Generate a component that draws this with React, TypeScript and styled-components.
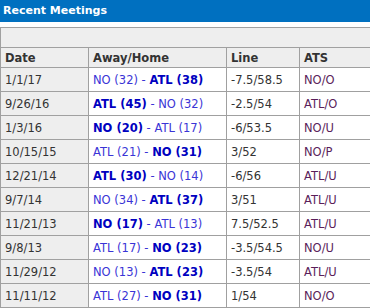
import styled, { createGlobalStyle } from 'styled-components'

const GlobalStyle = createGlobalStyle`
    body {
        margin: 0;
        background: #fff;
        font-family: "DejaVu Sans", Verdana, sans-serif;
    }
`

const Section_Panel = styled.section`
    width: 370px;
    background-color: #fff;
`
const H_Title = styled.h2`
    margin: 0;
    height: 22px;
    line-height: 22px;
    padding: 0 3px;
    background-color: #0070c0;
    color: #fff;
    font-size: 11px;
    font-weight: bold;
`
const Table_Meetings = styled.table`
    margin-top: 5px;
    width: 370px;
    border-collapse: collapse;
    table-layout: fixed;
    font-size: 11.5px;
    color: #333;
`
const Col_Width = styled.col<{ $w: number }>`
    width: ${(p) => p.$w}px;
`
const Td_Blank = styled.td`
    height: 19px;
    padding: 0;
    background-color: #eee;
    border: 1px solid #a0a0a0;
`
const Th_Head = styled.th`
    height: 19px;
    padding: 0 4px;
    text-align: left;
    font-size: 11.5px;
    font-weight: bold;
    color: #333;
    background-color: #eee;
    border: 1px solid #a0a0a0;
`
const Td_Cell = styled.td<{ $shade?: boolean; $ats?: boolean }>`
    height: 23px;
    padding: 0 4px;
    white-space: nowrap;
    overflow: hidden;
    background-color: ${(p) => (p.$shade ? '#eee' : '#fff')};
    color: ${(p) => (p.$ats ? '#5a1e5a' : '#333')};
    border: 1px solid #a0a0a0;
`
const Span_Team = styled.span<{ $win?: boolean }>`
    color: ${(p) => (p.$win ? '#0000c0' : '#3a34d6')};
    font-weight: ${(p) => (p.$win ? 'bold' : 'normal')};
`
const Span_Dash = styled.span`
    color: #3a34d6;
`

interface Side {
    team: string
    pts: number
}
interface Meeting {
    date: string
    away: Side
    home: Side
    line: string
    ats: string
}

const meetings: Meeting[] = [
    { date: '1/1/17', away: { team: 'NO', pts: 32 }, home: { team: 'ATL', pts: 38 }, line: '-7.5/58.5', ats: 'NO/O' },
    { date: '9/26/16', away: { team: 'ATL', pts: 45 }, home: { team: 'NO', pts: 32 }, line: '-2.5/54', ats: 'ATL/O' },
    { date: '1/3/16', away: { team: 'NO', pts: 20 }, home: { team: 'ATL', pts: 17 }, line: '-6/53.5', ats: 'NO/U' },
    { date: '10/15/15', away: { team: 'ATL', pts: 21 }, home: { team: 'NO', pts: 31 }, line: '3/52', ats: 'NO/P' },
    { date: '12/21/14', away: { team: 'ATL', pts: 30 }, home: { team: 'NO', pts: 14 }, line: '-6/56', ats: 'ATL/U' },
    { date: '9/7/14', away: { team: 'NO', pts: 34 }, home: { team: 'ATL', pts: 37 }, line: '3/51', ats: 'ATL/U' },
    { date: '11/21/13', away: { team: 'NO', pts: 17 }, home: { team: 'ATL', pts: 13 }, line: '7.5/52.5', ats: 'ATL/U' },
    { date: '9/8/13', away: { team: 'ATL', pts: 17 }, home: { team: 'NO', pts: 23 }, line: '-3.5/54.5', ats: 'NO/U' },
    { date: '11/29/12', away: { team: 'NO', pts: 13 }, home: { team: 'ATL', pts: 23 }, line: '-3.5/54', ats: 'ATL/U' },
    { date: '11/11/12', away: { team: 'ATL', pts: 27 }, home: { team: 'NO', pts: 31 }, line: '1/54', ats: 'NO/O' },
]

const App = () => {
    return (
        <>
            <GlobalStyle />
            <Section_Panel>
                <H_Title>Recent Meetings</H_Title>
                <Table_Meetings>
                    <colgroup>
                        <Col_Width $w={88} />
                        <Col_Width $w={138} />
                        <Col_Width $w={73} />
                        <Col_Width $w={71} />
                    </colgroup>
                    <thead>
                        <tr>
                            <Td_Blank colSpan={4} />
                        </tr>
                        <tr>
                            <Th_Head>Date</Th_Head>
                            <Th_Head>Away/Home</Th_Head>
                            <Th_Head>Line</Th_Head>
                            <Th_Head>ATS</Th_Head>
                        </tr>
                    </thead>
                    <tbody>
                        {meetings.map((m) => (
                            <tr key={m.date}>
                                <Td_Cell $shade>{m.date}</Td_Cell>
                                <Td_Cell>
                                    <Span_Team $win={m.away.pts > m.home.pts}>
                                        {m.away.team} ({m.away.pts})
                                    </Span_Team>
                                    <Span_Dash> - </Span_Dash>
                                    <Span_Team $win={m.home.pts > m.away.pts}>
                                        {m.home.team} ({m.home.pts})
                                    </Span_Team>
                                </Td_Cell>
                                <Td_Cell>{m.line}</Td_Cell>
                                <Td_Cell $ats>{m.ats}</Td_Cell>
                            </tr>
                        ))}
                    </tbody>
                </Table_Meetings>
            </Section_Panel>
        </>
    )
}

export default App
